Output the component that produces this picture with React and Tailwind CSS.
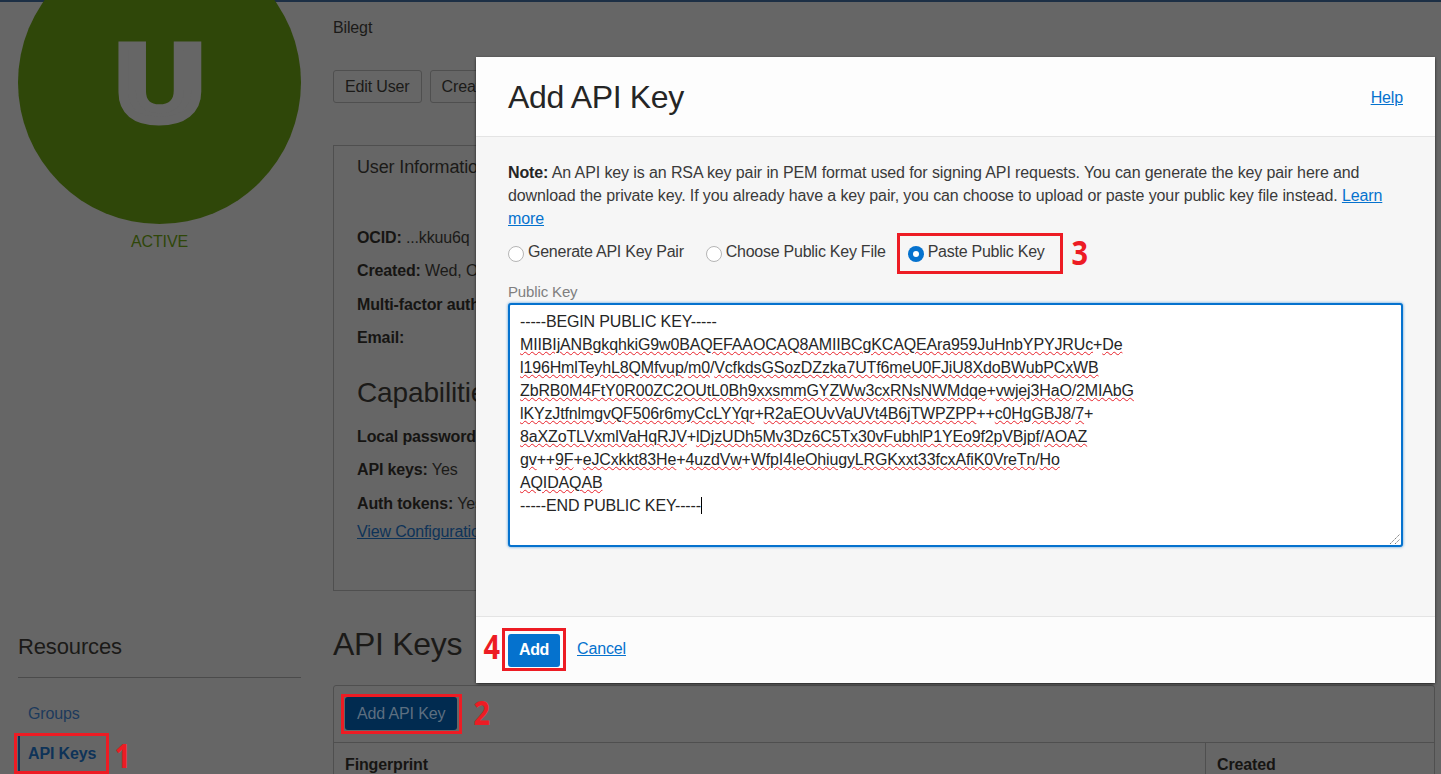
import React from 'react';

const keyLines = [
  'MIIBIjANBgkqhkiG9w0BAQEFAAOCAQ8AMIIBCgKCAQEAra959JuHnbYPYJRUc+De',
  'l196HmlTeyhL8QMfvup/m0/VcfkdsGSozDZzka7UTf6meU0FJiU8XdoBWubPCxWB',
  'ZbRB0M4FtY0R00ZC2OUtL0Bh9xxsmmGYZWw3cxRNsNWMdqe+vwjej3HaO/2MIAbG',
  'lKYzJtfnlmgvQF506r6myCcLYYqr+R2aEOUvVaUVt4B6jTWPZPP++c0HgGBJ8/7+',
  '8aXZoTLVxmlVaHqRJV+lDjzUDh5Mv3Dz6C5Tx30vFubhlP1YEo9f2pVBjpf/AOAZ',
  'gv++9F+eJCxkkt83He+4uzdVw+WfpI4IeOhiugyLRGKxxt33fcxAfiK0VreTn/Ho',
  'AQIDAQAB',
];

// red squiggle under each word, the spell checker skips + and /
const KeyLine = ({ text }) => (
  <div className="h-[23px] whitespace-pre">
    {text.split(/([+/])/).map((part, i) =>
      part === '+' || part === '/' ? (
        <span key={i}>{part}</span>
      ) : (
        <span key={i} className="underline decoration-wavy decoration-[#e8212a] decoration-1 underline-offset-1">
          {part}
        </span>
      )
    )}
  </div>
);

const Marker = ({ className, label, labelClass }) => (
  <>
    <div className={`absolute border-[3px] border-[#ed1c24] ${className}`} />
    <div className={`absolute font-['Open_Sans',sans-serif] text-[34px] leading-none font-bold tracking-normal text-[#ed1c24] scale-x-[.85] ${labelClass}`}>
      {label}
    </div>
  </>
);

const Radio = ({ label, checked }) => (
  <label className="flex items-center gap-[4px]">
    {checked ? (
      <span className="mt-[4px] flex h-[16px] w-[16px] items-center justify-center rounded-full bg-[#0572ce]">
        <span className="h-[6px] w-[6px] rounded-full bg-white" />
      </span>
    ) : (
      <span className="mt-[4px] h-[16px] w-[16px] rounded-full border border-[#b5b5b5] bg-white" />
    )}
    <span className="tracking-[-0.25px]">{label}</span>
  </label>
);

const Field = ({ name, children }) => (
  <p className="h-[33.3px] whitespace-nowrap">
    <b className="font-bold text-[#161513]">{name}</b> {children}
  </p>
);

export default function App() {
  return (
    <div className="relative h-[774px] w-full overflow-hidden bg-[#666666] font-['Liberation_Sans',sans-serif] text-[16px] tracking-[-0.14px] text-[#1b1a18]">
      <div className="h-[2px] bg-[#1c2f45]" />
      <div className="flex pl-[18px]">
        {/* left column */}
        <div className="w-[283px] shrink-0">
          <div className="mt-[-61px] flex h-[283px] w-[283px] items-center justify-center rounded-full bg-[#2f4709]">
            <span className="text-[108px] font-bold leading-none text-[#666666] scale-x-[1.12] [-webkit-text-stroke:9px_#666666]">U</span>
          </div>
          <div className="mt-[6px] text-center text-[#2f4709]">ACTIVE</div>
          <h3 className="mt-[378px] text-[22px] leading-[30px] text-[#1b1a18]">Resources</h3>
          <div className="mt-[15px] h-px bg-[#4b4b4b]" />
          <div className="mt-[24px] pl-[10px] text-[#1d3a5c]">Groups</div>
          <div className="mt-[10px] border-l-2 border-[#0e3358] py-[6px] pl-[8px] font-bold text-[#0e3358]">API Keys</div>
        </div>

        {/* main column */}
        <div className="ml-[32px] min-w-0 flex-1 pr-[6px]">
          <div className="mt-[16px] leading-[20px] text-[#1b1a18]">Bilegt</div>
          <div className="mt-[32px] flex gap-[8px]">
            <button className="h-[33px] rounded-[3px] border border-[#4f4f4f] px-[11px] text-[#1b1a18]">Edit User</button>
            <button className="h-[33px] rounded-[3px] border border-[#4f4f4f] px-[11px] text-[#1b1a18]">Create/Reset Password</button>
          </div>
          <div className="mt-[42px] h-[446px] border border-[#4f4f4f] pl-[23px]">
            <div className="mt-[9px] text-[18px] leading-[24px]">User Information</div>
            <div className="mt-[47px]">
              <Field name="OCID:">...kkuu6q</Field>
              <Field name="Created:">Wed, Oct 7, 2020</Field>
              <Field name="Multi-factor authentication:">Disabled</Field>
              <Field name="Email:">&nbsp;</Field>
            </div>
            <div className="mt-[16px] text-[28px] leading-[36px]">Capabilities</div>
            <div className="mt-[14px]">
              <Field name="Local password:">Yes</Field>
              <Field name="API keys:">Yes</Field>
              <Field name="Auth tokens:">Yes</Field>
            </div>
            <a className="mt-[-3px] block leading-[20px] text-[#0e3358] underline">View Configuration</a>
          </div>
          <h2 className="mt-[33px] text-[32px] leading-[40px] tracking-[-0.3px]">API Keys</h2>
          <div className="mt-[21px] rounded-t-[3px] border border-[#4f4f4f]">
            <div className="border-b border-[#4f4f4f] pb-[12px] pl-[11px] pt-[11px]">
              <button className="h-[33px] rounded-[3px] bg-[#012b50] px-[12px] text-[#5d6f80]">Add API Key</button>
            </div>
            <div className="flex font-bold leading-[44px] text-[#161513]">
              <div className="w-[872px] border-r border-[#4f4f4f] pl-[11px]">Fingerprint</div>
              <div className="pl-[11px]">Created</div>
            </div>
          </div>
        </div>
      </div>

      {/* modal */}
      <div className="absolute left-[476px] top-[57px] flex h-[626px] w-[959px] flex-col rounded-[2px] bg-[#f6f6f6] shadow-[0_1px_3px_rgba(0,0,0,0.7)]">
        <div className="flex h-[80px] items-center justify-between border-b border-[#e4e4e4] bg-[#fdfdfd] px-[32px]">
          <h1 className="text-[32px] leading-[40px] tracking-[-0.35px] text-[#252525]">Add API Key</h1>
          <a className="mt-[2px] text-[#0572ce] underline">Help</a>
        </div>
        <div className="flex-1 px-[32px] pt-[24px] text-[#3a3a3a]">
          <p className="leading-[23.2px] tracking-[-0.11px]">
            <b className="text-[#252525]">Note:</b> An API key is an RSA key pair in PEM format used for signing API requests. You can generate the key pair here and download the private key. If you already have a key pair, you can choose to upload or paste your public key file instead.{' '}
            <a className="text-[#0572ce] underline">Learn more</a>
          </p>
          <div className="mt-[11px] flex gap-[22px] leading-[20px] text-[#3a3a3a]">
            <Radio label="Generate API Key Pair" />
            <Radio label="Choose Public Key File" />
            <Radio label="Paste Public Key" checked />
          </div>
          <div className="mt-[21px] text-[15px] leading-[18px] text-[#7f7f7f]">Public Key</div>
          <div className="relative mt-[2px] h-[244px] rounded-[3px] border-2 border-[#0572ce] bg-white px-[10px] pt-[5px] text-[#252525] shadow-[0_0_3px_rgba(5,114,206,0.7)]">
            <div className="h-[23px]">-----BEGIN PUBLIC KEY-----</div>
            {keyLines.map((line) => (
              <KeyLine key={line} text={line} />
            ))}
            <div className="h-[23px]">
              -----END PUBLIC KEY-----<span className="border-l border-black" />
            </div>
            <svg className="absolute bottom-0 right-0" width="12" height="12" viewBox="0 0 12 12" fill="none" stroke="#7a7a7a" strokeWidth="1" strokeDasharray="1.5 0.8">
              <path d="M1 11 L11 1 M6 11 L11 6" />
            </svg>
          </div>
        </div>
        <div className="flex h-[67px] items-center gap-[17px] border-t border-[#e4e4e4] bg-[#fcfcfc] pl-[32px]">
          <button className="h-[33px] w-[52px] rounded-[3px] bg-[#0572ce] font-bold tracking-[-0.4px] text-white">Add</button>
          <a className="mt-[-2px] text-[#0572ce] underline">Cancel</a>
        </div>
      </div>

      {/* red callouts */}
      <Marker className="left-[14px] top-[733px] h-[41px] w-[95px]" label="1" labelClass="left-[113px] top-[738px]" />
      <Marker className="left-[341px] top-[694px] h-[40px] w-[121px]" label="2" labelClass="left-[472px] top-[695px]" />
      <Marker className="left-[897px] top-[233px] h-[41px] w-[166px]" label="3" labelClass="left-[1070px] top-[235px]" />
      <Marker className="left-[502px] top-[628px] h-[43px] w-[64px]" label="4" labelClass="left-[482px] top-[629px]" />
    </div>
  );
}
